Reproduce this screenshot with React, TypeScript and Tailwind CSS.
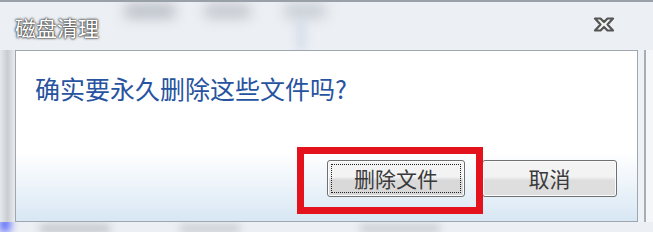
import React from "react";

const font = { fontFamily: '"Noto Sans CJK SC", "Noto Sans", sans-serif' };

function CloseIcon() {
  return (
    <svg width="22" height="15" viewBox="0 0 22 15">
      <path
        d="M2 1.5 H7.5 L11 5 L14.5 1.5 H20 L14.5 7.5 L20 13.5 H14.5 L11 10 L7.5 13.5 H2 L7.5 7.5 Z"
        fill="#f2f2f2"
        stroke="#555"
        strokeWidth="2.2"
        strokeLinejoin="round"
      />
    </svg>
  );
}

export default function App() {
  return (
    <div
      className="relative w-[653px] h-[232px] overflow-hidden bg-[#eceff3] flex flex-col"
      style={font}
    >
      {/* blurry background patches (glass) */}
      <div className="absolute left-[125px] top-[5px] w-[50px] h-[12px] bg-[#8a919c] blur-[7px] opacity-60" />
      <div className="absolute left-[205px] top-[5px] w-[45px] h-[12px] bg-[#8a919c] blur-[7px] opacity-50" />
      <div className="absolute left-[285px] top-[5px] w-[40px] h-[12px] bg-[#949cab] blur-[7px] opacity-50" />
      <div className="absolute left-[296px] top-[20px] w-[10px] h-[30px] bg-[#c7d5e6] blur-[5px] opacity-60" />
      <div className="absolute left-[0px] top-[216px] w-[10px] h-[16px] bg-[#2a3cff] blur-[4px] opacity-80" />
      <div className="absolute left-[40px] top-[225px] w-[70px] h-[7px] bg-[#8a8f96] blur-[4px] opacity-50" />
      <div className="absolute left-[180px] top-[225px] w-[60px] h-[7px] bg-[#8a8f96] blur-[4px] opacity-40" />
      <div className="absolute left-[360px] top-[225px] w-[80px] h-[7px] bg-[#8a8f96] blur-[4px] opacity-40" />

      {/* top border */}
      <div className="relative h-[2px] bg-[#9aa0a8]" />

      {/* title bar */}
      <div className="relative h-[48px] flex items-start justify-between pl-[15px] pr-[38px]">
        <div className="mt-[12px] text-[21px] leading-[26px] text-white [text-shadow:0_0_3px_#3a3a3a,0_0_2px_#3a3a3a,0_0_1px_#3a3a3a]">
          磁盘清理
        </div>
        <div className="mt-[15px]">
          <CloseIcon />
        </div>
      </div>

      {/* body row */}
      <div className="relative flex h-[172px]">
        <div className="w-[15px] bg-gradient-to-r from-[#e6e8eb] via-[#c9cdd2] to-[#e9ecef]" />
        <div className="relative w-[623px] border border-[#9ea6b0] bg-gradient-to-b from-white from-60% to-[#d8e7f4] flex flex-col justify-between">
          <div className="pl-[19px] pt-[22px] text-[25px] leading-[30px] text-[#2753a0]">
            确实要永久删除这些文件吗?
          </div>
          <div className="flex justify-end gap-[17px] pr-[20px] pb-[24px]">
            <button className="relative w-[138px] h-[37px] rounded-[3px] border border-[#707070] bg-gradient-to-b from-[#f3f3f3] from-45% to-[#d9d9d9] to-55% text-[21px] text-[#3a3a3a] shadow-[inset_0_0_0_1px_#fcfcfc]">
              <span className="absolute inset-[3px] border border-dotted border-[#222]" />
              <span className="relative">删除文件</span>
            </button>
            <button className="w-[135px] h-[37px] rounded-[3px] border border-[#707070] bg-gradient-to-b from-[#f3f3f3] from-45% to-[#dedede] to-55% text-[21px] text-[#3a3a3a] shadow-[inset_0_0_0_1px_#fcfcfc]">
              取消
            </button>
          </div>
        </div>
        <div className="flex-1 flex">
          <div className="w-[6px] bg-[#eef2f6]" />
          <div className="w-[2px] bg-[#a6adb5]" />
          <div className="flex-1 bg-[#f4f6f8]" />
        </div>
      </div>

      {/* red annotation box */}
      <div className="absolute left-[297px] top-[147px] w-[186px] h-[67px] border-[7px] border-[#e3121c]" />
    </div>
  );
}
